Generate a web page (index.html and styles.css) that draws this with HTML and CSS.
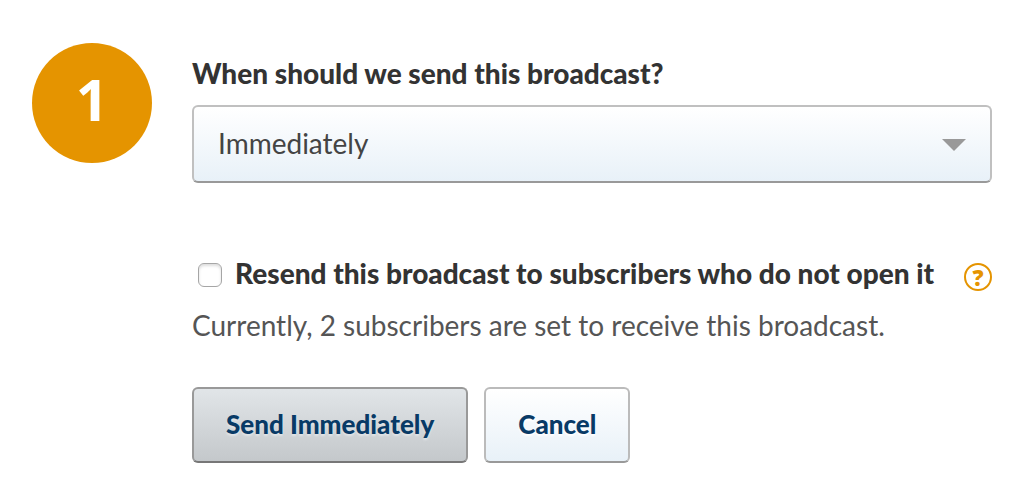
FILE: index.html
```
<!DOCTYPE html>
<html lang="en">
<head>
<meta charset="utf-8">
<meta name="viewport" content="width=device-width, initial-scale=1">
<title>Send broadcast</title>
<link rel="stylesheet" href="styles.css">
</head>
<body>
<form class="step">
  <div class="step-number">1</div>
  <div class="step-body">
    <label class="title" for="when">When should we send this broadcast?</label>
    <div class="select-wrap">
      <select class="select" id="when">
        <option>Immediately</option>
      </select>
      <svg class="arrow" viewBox="0 0 24 12" aria-hidden="true"><path d="M0 0h24L12 12z" fill="#999"/></svg>
    </div>
    <div class="resend">
      <input class="check" type="checkbox" id="resend">
      <label class="resend-label" for="resend">Resend this broadcast to subscribers who do not open it</label>
      <button class="help" type="button">?</button>
    </div>
    <p class="note">Currently, 2 subscribers are set to receive this broadcast.</p>
    <div class="actions">
      <button class="button button-primary" type="submit">Send Immediately</button>
      <button class="button" type="button">Cancel</button>
    </div>
  </div>
</form>
</body>
</html>
```

FILE: styles.css
```
* {
  box-sizing: border-box;
}

body {
  margin: 0;
  background: #fff;
  color: #333;
  font-family: Lato, sans-serif;
  font-size: 28px;
  line-height: 36px;
}

.step {
  display: flex;
  gap: 40px;
  padding: 43px 34px 39px 32px;
}

.step-number {
  flex: none;
  width: 120px;
  height: 120px;
  border-radius: 50%;
  background: #e59400;
  color: #fff;
  font-family: "Open Sans", sans-serif;
  font-size: 57px;
  font-weight: 700;
  line-height: 112px;
  text-align: center;
}

.step-body {
  flex: 1;
  min-width: 0;
  padding-top: 12px;
}

.title {
  display: block;
  font-weight: 900;
}

.select-wrap {
  position: relative;
  margin-top: 14px;
}

.select {
  display: block;
  width: 100%;
  height: 78px;
  padding: 0 60px 2px 24px;
  border: 2px solid #c0c0c0;
  border-bottom-color: #999;
  border-radius: 6px;
  appearance: none;
  background: linear-gradient(#fff, #e8f1f8);
  color: #444;
  font: inherit;
}

.arrow {
  position: absolute;
  top: 34px;
  right: 26px;
  width: 24px;
  height: 12px;
  pointer-events: none;
}

.resend {
  display: flex;
  align-items: flex-end;
  margin-top: 72px;
}

.check {
  flex: none;
  width: 24px;
  height: 24px;
  margin: 0 13px 4px 6px;
  border: 1px solid #a6a6a6;
  border-radius: 6px;
  appearance: none;
  background: #fff;
  box-shadow: inset 0 2px 3px #ddd;
}

.resend-label {
  font-weight: 900;
}

.help {
  flex: none;
  width: 28px;
  height: 28px;
  margin-left: auto;
  padding: 0;
  border: 2px solid #e59400;
  border-radius: 50%;
  background: #fff;
  color: #e59400;
  font-family: "Open Sans", sans-serif;
  font-size: 22px;
  font-weight: 800;
  line-height: 24px;
}

.note {
  margin: 16px 0 0;
  color: #555;
}

.actions {
  display: flex;
  gap: 16px;
  margin-top: 44px;
}

.button {
  height: 76px;
  padding: 0 32px 2px;
  border: 2px solid #bbb;
  border-bottom-color: #999;
  border-radius: 6px;
  background: linear-gradient(#fff, #e8f1f8);
  color: #083a66;
  font: inherit;
  font-size: 26px;
  font-weight: 900;
  text-shadow: 0 2px 2px #fff;
}

.button-primary {
  border-color: #999;
  border-bottom-color: #777;
  background: linear-gradient(#e1e5e8, #c4c8cb);
  text-shadow: 0 2px 2px #e1e5e8;
}
```
